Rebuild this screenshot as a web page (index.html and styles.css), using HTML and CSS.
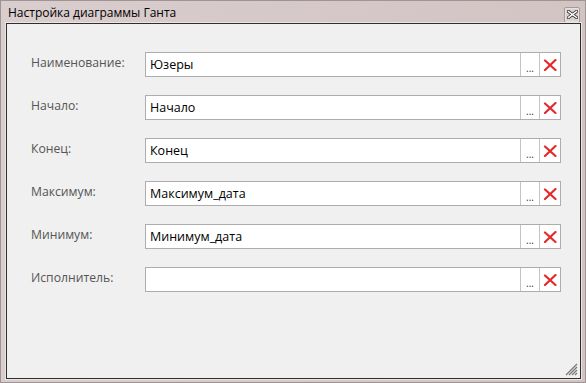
FILE: index.html
```html
<!DOCTYPE html>
<html lang="ru">
<head>
<meta charset="utf-8">
<title>Настройка диаграммы Ганта</title>
<link rel="stylesheet" href="styles.css">
</head>
<body>
<div class="window">
  <div class="titlebar">
    <span class="title">Настройка диаграммы Ганта</span>
    <button class="close" aria-label="Закрыть">
      <svg width="11" height="9" viewBox="0 0 11 9">
        <path d="M1.5 1.5 L9.5 7.5 M9.5 1.5 L1.5 7.5" stroke="#3a3a3a" stroke-width="3.2" stroke-linecap="square"/>
        <path d="M1.5 1.5 L9.5 7.5 M9.5 1.5 L1.5 7.5" stroke="#ffffff" stroke-width="1.4" stroke-linecap="square"/>
      </svg>
    </button>
  </div>
  <div class="content">
    <div class="form">
      <div class="row"><label class="label">Наименование:</label><div class="field"><span class="value">Юзеры</span><span class="dots">...</span><span class="clear"><svg width="14" height="12" viewBox="0 0 14 12"><path d="M2 1.5 L12.5 11 M12.5 1 L2 11" stroke="#e32a2a" stroke-width="2.2" stroke-linecap="round"/></svg></span></div></div>
      <div class="row"><label class="label">Начало:</label><div class="field"><span class="value">Начало</span><span class="dots">...</span><span class="clear"><svg width="14" height="12" viewBox="0 0 14 12"><path d="M2 1.5 L12.5 11 M12.5 1 L2 11" stroke="#e32a2a" stroke-width="2.2" stroke-linecap="round"/></svg></span></div></div>
      <div class="row"><label class="label">Конец:</label><div class="field"><span class="value">Конец</span><span class="dots">...</span><span class="clear"><svg width="14" height="12" viewBox="0 0 14 12"><path d="M2 1.5 L12.5 11 M12.5 1 L2 11" stroke="#e32a2a" stroke-width="2.2" stroke-linecap="round"/></svg></span></div></div>
      <div class="row"><label class="label">Максимум:</label><div class="field"><span class="value">Максимум_дата</span><span class="dots">...</span><span class="clear"><svg width="14" height="12" viewBox="0 0 14 12"><path d="M2 1.5 L12.5 11 M12.5 1 L2 11" stroke="#e32a2a" stroke-width="2.2" stroke-linecap="round"/></svg></span></div></div>
      <div class="row"><label class="label">Минимум:</label><div class="field"><span class="value">Минимум_дата</span><span class="dots">...</span><span class="clear"><svg width="14" height="12" viewBox="0 0 14 12"><path d="M2 1.5 L12.5 11 M12.5 1 L2 11" stroke="#e32a2a" stroke-width="2.2" stroke-linecap="round"/></svg></span></div></div>
      <div class="row"><label class="label">Исполнитель:</label><div class="field"><span class="value"></span><span class="dots">...</span><span class="clear"><svg width="14" height="12" viewBox="0 0 14 12"><path d="M2 1.5 L12.5 11 M12.5 1 L2 11" stroke="#e32a2a" stroke-width="2.2" stroke-linecap="round"/></svg></span></div></div>
    </div>
    <svg class="grip" width="13" height="13" viewBox="0 0 13 13">
      <path d="M12 1 L1 12 M12 4 L4 12 M12 7 L7 12 M12 10 L10 12" stroke="#7a7a7a" stroke-width="1.3"/>
    </svg>
  </div>
</div>
</body>
</html>
```
FILE: styles.css
```css
* { box-sizing: border-box; }
html, body { margin: 0; padding: 0; background: #ffffff; }
body { font-family: "Open Sans", "Noto Sans", "DejaVu Sans", sans-serif; }

.window {
  width: 586px;
  height: 383px;
  display: flex;
  flex-direction: column;
  background: linear-gradient(to right, #d9cdcd, #d3c4c4);
  border: 1px solid #9e9494;
  padding: 0 4px 3px 5px;
}

.titlebar {
  height: 22px;
  display: flex;
  align-items: center;
  justify-content: space-between;
  flex: none;
}
.title {
  font-size: 12px;
  color: #000;
  padding-left: 2px;
  padding-top: 1px;
}
.close {
  width: 16px;
  height: 16px;
  margin-top: 5px;
  margin-right: 1px;
  padding: 0;
  border: 1px solid #a59a9a;
  border-radius: 2px;
  background: #ddd2d2;
  display: flex;
  align-items: center;
  justify-content: center;
  box-shadow: inset 0 0 0 1px #e9e0e0;
}

.content {
  flex: 1;
  position: relative;
  background: #f0f0f0;
  border: 1px solid #2e2e2e;
  box-shadow: 0 0 0 1px #ebe6e6;
  padding: 28px 19px 0 24px;
}

.form {
  display: flex;
  flex-direction: column;
  gap: 18px;
}
.row {
  display: flex;
  align-items: center;
  height: 25px;
}
.label {
  width: 114px;
  font-size: 12.2px;
  color: #555555;
  margin-top: -5px;
}
.field {
  flex: 1;
  display: flex;
  height: 25px;
  border: 1px solid #adadad;
  background: #ffffff;
}
.value {
  flex: 1;
  font-size: 12.5px;
  color: #000;
  padding-left: 4px;
  line-height: 23px;
}
.dots {
  width: 19px;
  border-left: 1px solid #c4c4c4;
  background: #ffffff;
  font-size: 10px;
  color: #333;
  text-align: center;
  line-height: 31px;
  overflow: hidden;
}
.clear {
  width: 21px;
  border-left: 1px solid #c4c4c4;
  display: flex;
  align-items: center;
  justify-content: center;
}

.grip {
  position: absolute;
  right: 2px;
  bottom: 2px;
}
```
